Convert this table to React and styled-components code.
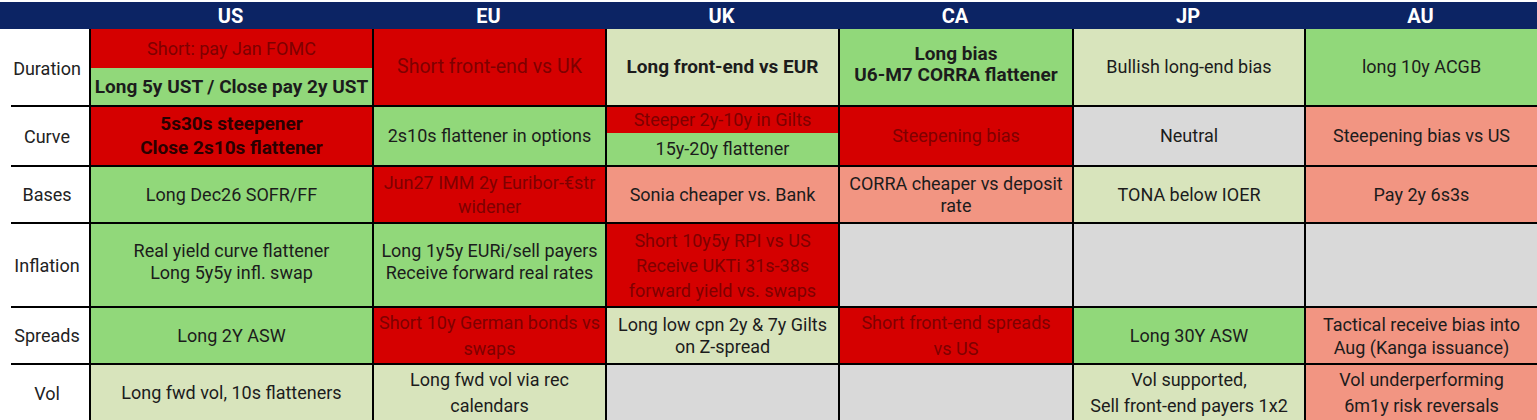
import React from 'react';
import styled, { createGlobalStyle } from 'styled-components';

const GlobalStyle = createGlobalStyle`
  html, body { margin: 0; padding: 0; background: #ffffff; }
  body { font-family: Roboto, "Liberation Sans", Arial, sans-serif; }
  * { box-sizing: border-box; }
`;

const fills = {
  red: '#d50000',
  green: '#91d87a',
  pale: '#d8e4bc',
  salmon: '#f29582',
  grey: '#d9d9d9',
};

const inkFor = (fill, bold) => {
  if (fill === 'red') return bold ? '#2a0000' : '#7e0000';
  return '#1c1c1c';
};

const Page = styled.div`
  width: 1537px;
  padding-top: 2px;
  overflow: hidden;
`;

const Table = styled.div`
  display: grid;
  grid-template-columns: 89px 283px 233px 233px 234px 232px 233px;
  grid-template-rows: 27px 76px 60px 57px 84px 57px 58px;
`;

const HeadCell = styled.div`
  background: #0c2464;
  color: #ffffff;
  font-weight: 700;
  font-size: 20px;
  padding-top: 1px;
  display: flex;
  align-items: center;
  justify-content: center;
`;

const RowLabel = styled.div`
  margin-left: 11px;
  padding-right: 6px;
  padding-top: ${(p) => (p.$first ? 3 : 0)}px;
  border-top: ${(p) => (p.$first ? 'none' : '2px solid #000')};
  display: flex;
  align-items: center;
  justify-content: center;
  font-size: 18px;
  color: #222222;
`;

const Cell = styled.div`
  border-left: 2px solid #000;
  border-top: ${(p) => (p.$first ? 'none' : '2px solid #000')};
  background: ${(p) => fills[p.$fill] || 'transparent'};
  color: ${(p) => inkFor(p.$fill, p.$bold)};
  font-weight: ${(p) => (p.$bold ? 700 : 400)};
  font-size: ${(p) => (p.$bold ? 19 : p.$size || 18)}px;
  line-height: ${(p) => p.$lh || 22}px;
  text-align: center;
  display: flex;
  flex-direction: column;
  align-items: stretch;
  justify-content: center;
  padding: 0 ${(p) => (p.$split ? 0 : 2)}px;
  padding-bottom: ${(p) => p.$lift || 0}px;
`;

const Band = styled.div`
  flex: 0 0 ${(p) => p.$h}px;
  background: ${(p) => fills[p.$fill]};
  color: ${(p) => inkFor(p.$fill, p.$bold)};
  font-weight: ${(p) => (p.$bold ? 700 : 400)};
  font-size: ${(p) => (p.$bold ? 19 : 18)}px;
  display: flex;
  align-items: center;
  justify-content: center;
  white-space: nowrap;
`;

const Line = styled.div`
  white-space: nowrap;
`;

const columns = ['US', 'EU', 'UK', 'CA', 'JP', 'AU'];

const rows = [
  {
    label: 'Duration',
    cells: [
      {
        split: [
          { fill: 'red', text: 'Short: pay Jan FOMC', h: 39 },
          { fill: 'green', bold: true, text: 'Long 5y UST / Close pay 2y UST', h: 37 },
        ],
      },
      { fill: 'red', size: 19.5, lines: ['Short front-end vs UK'] },
      { fill: 'pale', bold: true, lines: ['Long front-end vs EUR'] },
      { fill: 'green', bold: true, lh: 21, lift: 6, lines: ['Long bias', 'U6-M7 CORRA flattener'] },
      { fill: 'pale', lines: ['Bullish long-end bias'] },
      { fill: 'green', lines: ['long 10y ACGB'] },
    ],
  },
  {
    label: 'Curve',
    cells: [
      { fill: 'red', bold: true, lh: 24, lines: ['5s30s steepener', 'Close 2s10s flattener'] },
      { fill: 'green', lines: ['2s10s flattener in options'] },
      {
        split: [
          { fill: 'red', text: 'Steeper 2y-10y in Gilts', h: 26 },
          { fill: 'green', text: '15y-20y flattener', h: 32 },
        ],
      },
      { fill: 'red', lines: ['Steepening bias'] },
      { fill: 'grey', lines: ['Neutral'] },
      { fill: 'salmon', lines: ['Steepening bias vs US'] },
    ],
  },
  {
    label: 'Bases',
    cells: [
      { fill: 'green', lines: ['Long Dec26 SOFR/FF'] },
      { fill: 'red', lh: 24, lines: ['Jun27 IMM 2y Euribor-€str', 'widener'] },
      { fill: 'salmon', lines: ['Sonia cheaper vs. Bank'] },
      { fill: 'salmon', lines: ['CORRA cheaper vs deposit', 'rate'] },
      { fill: 'pale', lines: ['TONA below IOER'] },
      { fill: 'salmon', lines: ['Pay 2y 6s3s'] },
    ],
  },
  {
    label: 'Inflation',
    cells: [
      { fill: 'green', lift: 6, lines: ['Real yield curve flattener', 'Long 5y5y infl. swap'] },
      { fill: 'green', lift: 6, lines: ['Long 1y5y EURi/sell payers', 'Receive forward real rates'] },
      { fill: 'red', lh: 25, lines: ['Short 10y5y RPI vs US', 'Receive UKTi 31s-38s', 'forward yield vs. swaps'] },
      { fill: 'grey', lines: [] },
      { fill: 'grey', lines: [] },
      { fill: 'grey', lines: [] },
    ],
  },
  {
    label: 'Spreads',
    cells: [
      { fill: 'green', lines: ['Long 2Y ASW'] },
      { fill: 'red', lh: 26, lines: ['Short 10y German bonds vs', 'swaps'] },
      { fill: 'pale', lines: ['Long low cpn 2y & 7y Gilts', 'on Z-spread'] },
      { fill: 'red', lh: 26, lines: ['Short front-end spreads', 'vs US'] },
      { fill: 'green', lines: ['Long 30Y ASW'] },
      { fill: 'salmon', lh: 23, lines: ['Tactical receive bias into', 'Aug (Kanga issuance)'] },
    ],
  },
  {
    label: 'Vol',
    cells: [
      { fill: 'pale', lines: ['Long fwd vol, 10s flatteners'] },
      { fill: 'pale', lh: 26, lines: ['Long fwd vol via rec', 'calendars'] },
      { fill: 'grey', lines: [] },
      { fill: 'grey', lines: [] },
      { fill: 'pale', lh: 26, lines: ['Vol supported,', 'Sell front-end payers 1x2'] },
      { fill: 'salmon', lh: 26, lines: ['Vol underperforming', '6m1y risk reversals'] },
    ],
  },
];

export default function App() {
  return (
    <>
      <GlobalStyle />
      <Page>
        <Table>
          <HeadCell />
          {columns.map((c) => (
            <HeadCell key={c}>{c}</HeadCell>
          ))}
          {rows.map((row, ri) => (
            <React.Fragment key={row.label}>
              <RowLabel $first={ri === 0}>{row.label}</RowLabel>
              {row.cells.map((cell, ci) =>
                cell.split ? (
                  <Cell key={ci} $first={ri === 0} $split>
                    {cell.split.map((b, bi) => (
                      <Band key={bi} $fill={b.fill} $bold={b.bold} $h={b.h}>
                        {b.text}
                      </Band>
                    ))}
                  </Cell>
                ) : (
                  <Cell
                    key={ci}
                    $first={ri === 0}
                    $fill={cell.fill}
                    $bold={cell.bold}
                    $size={cell.size}
                    $lh={cell.lh}
                    $lift={cell.lift}
                  >
                    {cell.lines.map((t, li) => (
                      <Line key={li}>{t}</Line>
                    ))}
                  </Cell>
                )
              )}
            </React.Fragment>
          ))}
        </Table>
      </Page>
    </>
  );
}
